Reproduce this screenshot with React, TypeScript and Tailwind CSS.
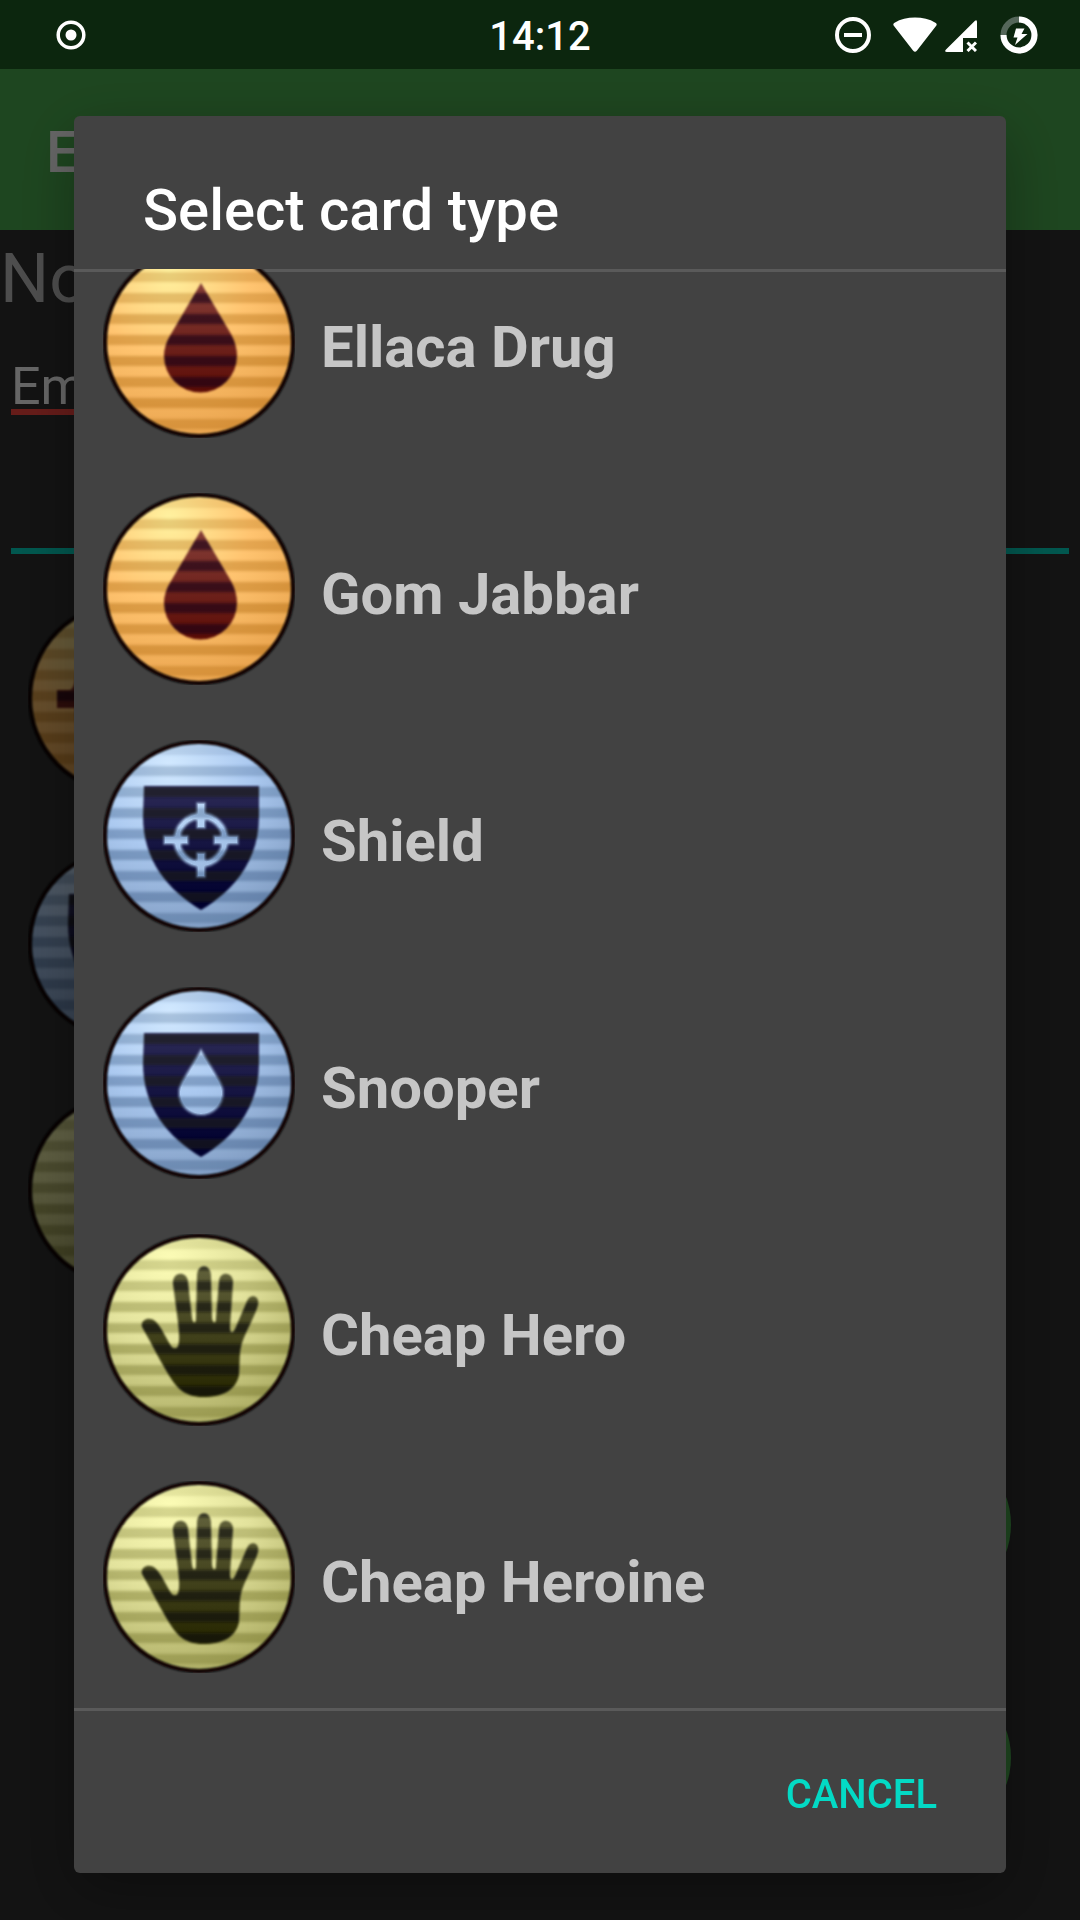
import { useId } from "react";

type Tone = "orange" | "blue" | "yellow";
type Symbol = "drop" | "shieldTarget" | "shieldDrop" | "hand" | "cross" | "none";

const tones: Record<Tone, { base: [string, string, string]; stripe: string; ink: [string, string]; inkStripe: string }> = {
  orange: { base: ["#fff2a0", "#ffc470", "#eba650"], stripe: "#a05c00", ink: ["#843c36", "#560600"], inkStripe: "#180014" },
  blue: { base: ["#d2e9ff", "#abc9f0", "#84a0c6"], stripe: "#2c4c74", ink: ["#2e2c58", "#00002e"], inkStripe: "#1c1c14" },
  yellow: { base: ["#fcfcb6", "#e2e29c", "#b1b168"], stripe: "#5e5e14", ink: ["#5e5e38", "#262600"], inkStripe: "#08080c" },
};

const stripes = [
  { y: 10, o: 0.12 },
  { y: 31, o: 0.24 },
  { y: 52, o: 0.28 },
  { y: 73, o: 0.32 },
  { y: 94, o: 0.34 },
  { y: 115, o: 0.36 },
  { y: 136, o: 0.34 },
  { y: 157, o: 0.34 },
  { y: 178, o: 0.28 },
];

const SHIELD = "M41 46H156V76C156 121 131 150 98 170C65 150 40 121 40 76Z";
const HAND =
  "M39 93C37 86 46 82 52 87C58 92 63 104 68 112C70 115 74 115 75 112C77 106 76 98 75 88L70 50C69 38 83 36 85 47L89 84C90 90 93 90 93 84L94 42C94 29 108 29 108 42L109 84C110 90 113 90 113 84L116 47C117 36 131 38 130 49L127 93C127 100 130 99 132 95L144 67C148 59 157 62 155 71C153 80 143 97 139 109C136 118 137 128 136 141C133 156 120 163 100 163C82 163 74 154 67 143C57 127 50 112 39 93Z";

function SymbolShape({ symbol }: { symbol: Symbol }) {
  switch (symbol) {
    case "drop":
      return <path d="M98 37L128 88Q134 99 134 110A36.500 36.500 0 0 1 61 110Q61 99 68 88Z" fill="white" />;
    case "shieldTarget":
      return (
        <>
          <path d={SHIELD} fill="white" />
          <g fill="none" stroke="black">
            <circle cx="98" cy="100" r="24" strokeWidth="8" />
            <path d="M98 62V89M98 112V138M60 100H86M110 100H136" strokeWidth="10" />
          </g>
        </>
      );
    case "shieldDrop":
      return (
        <>
          <path d={SHIELD} fill="white" />
          <path d="M98 61L117 93Q121 100 121 106A23 23 0 0 1 75 106Q75 100 79 93Z" fill="black" />
        </>
      );
    case "hand":
      return <path d={HAND} fill="white" />;
    case "cross":
      return <path d="M29 88H42Q47 86 48 70H64V88H150V106H64V124H48L47 106H29Z" fill="white" />;
    default:
      return null;
  }
}

function CardToken({ tone, symbol }: { tone: Tone; symbol: Symbol }) {
  const id = useId();
  const t = tones[tone];
  return (
    <svg viewBox="0 0 192 192" className="size-48 shrink-0" aria-hidden="true">
      <defs>
        <radialGradient id={`${id}base`} gradientUnits="userSpaceOnUse" cx="66" cy="26" r="165">
          <stop offset="0" stopColor={t.base[0]} />
          <stop offset="0.5" stopColor={t.base[1]} />
          <stop offset="1" stopColor={t.base[2]} />
        </radialGradient>
        <linearGradient id={`${id}ink`} gradientUnits="userSpaceOnUse" x1="0" y1="40" x2="0" y2="160">
          <stop offset="0" stopColor={t.ink[0]} />
          <stop offset="1" stopColor={t.ink[1]} />
        </linearGradient>
        <filter id={`${id}soft`} x="-10%" y="-60%" width="120%" height="220%">
          <feGaussianBlur stdDeviation="1.6" />
        </filter>
        <filter id={`${id}edge`} x="-5%" y="-5%" width="110%" height="110%">
          <feGaussianBlur stdDeviation="0.8" />
        </filter>
        <clipPath id={`${id}clip`}>
          <circle cx="96" cy="96" r="94" />
        </clipPath>
        <mask id={`${id}mask`} maskUnits="userSpaceOnUse" x="0" y="0" width="192" height="192">
          <g filter={`url(#${id}edge)`}>
            <SymbolShape symbol={symbol} />
          </g>
        </mask>
      </defs>
      <g clipPath={`url(#${id}clip)`}>
        <rect width="192" height="192" fill={`url(#${id}base)`} />
        {stripes.map((s) => (
          <rect key={s.y} x="0" y={s.y - 5} width="192" height="10" fill={t.stripe} opacity={s.o} filter={`url(#${id}soft)`} />
        ))}
      </g>
      <g mask={`url(#${id}mask)`}>
        <rect width="192" height="192" fill={`url(#${id}ink)`} />
        {stripes.map((s) => (
          <rect key={s.y} x="0" y={s.y - 5} width="192" height="10" fill={t.inkStripe} opacity="0.6" filter={`url(#${id}soft)`} />
        ))}
      </g>
      <circle cx="96" cy="96" r="94" fill="none" stroke="#0a0604" strokeWidth="4" filter={`url(#${id}edge)`} />
    </svg>
  );
}

const cards: { name: string; tone: Tone; symbol: Symbol }[] = [
  { name: "Ellaca Drug", tone: "orange", symbol: "drop" },
  { name: "Gom Jabbar", tone: "orange", symbol: "drop" },
  { name: "Shield", tone: "blue", symbol: "shieldTarget" },
  { name: "Snooper", tone: "blue", symbol: "shieldDrop" },
  { name: "Cheap Hero", tone: "yellow", symbol: "hand" },
  { name: "Cheap Heroine", tone: "yellow", symbol: "hand" },
];

function StatusBar() {
  return (
    <header className="relative z-20 grid h-[69px] grid-cols-3 items-center bg-[#0c260e] text-white">
      <svg viewBox="0 0 30 30" className="ml-14 size-[30px]" aria-hidden="true">
        <circle cx="15" cy="15" r="12.800" fill="none" stroke="currentColor" strokeWidth="3.500" />
        <circle cx="15" cy="15" r="5.500" fill="currentColor" />
      </svg>
      <time className="pt-1 text-center text-[40px] leading-10 font-medium">14:12</time>
      <div className="mr-[42px] flex items-center justify-end">
        <svg viewBox="0 0 36 36" className="mr-[22px] size-9" aria-hidden="true" fill="none" stroke="currentColor">
          <circle cx="18" cy="18" r="16" strokeWidth="4" />
          <path d="M9 18H27" strokeWidth="4" />
        </svg>
        <svg viewBox="0 0 44 36" className="mr-2 h-9 w-11" aria-hidden="true" fill="currentColor">
          <path d="M1 9C-.2 7.600.2 6.600 1.600 5.700C7.500 2.300 14.500.6 22 .6S36.500 2.300 42.400 5.700C43.800 6.600 44.200 7.600 43 9L24 33.600C22.600 35.200 21.400 35.200 20 33.600Z" />
        </svg>
        <svg viewBox="0 0 32 32" className="mt-[3px] mr-[23px] size-8" aria-hidden="true">
          <path d="M30 .8Q32-.6 32 2V18H18V32H2Q-1.200 32 1 29.500Z" fill="currentColor" />
          <path d="M22.500 22.500L31 31M31 22.500L22.500 31" stroke="currentColor" strokeWidth="3" />
        </svg>
        <svg viewBox="0 0 38 38" className="size-[38px]" aria-hidden="true">
          <circle cx="19" cy="19" r="15.500" fill="none" stroke="#55675a" strokeWidth="6" />
          <path d="M19 3.500A15.500 15.500 0 1 1 3.500 19" fill="none" stroke="currentColor" strokeWidth="6" />
          <path d="M16 12.500H24.500L21.500 18H27.500L15 29L17.500 21.500H13.500Z" fill="currentColor" />
        </svg>
      </div>
    </header>
  );
}

function DeckScreen() {
  return (
    <div className="flex flex-1 flex-col">
      <div className="flex h-[161px] items-center bg-[#4caf50] pt-1 pl-[46px]">
        <h1 className="text-[58px] leading-[68px] font-medium text-white">E</h1>
      </div>
      <main className="flex flex-1 flex-col">
        <p className="mt-2 text-[69px] leading-[81px] text-[#c1c1c1]">No</p>
        <input
          aria-label="Name"
          defaultValue="Em"
          className="mt-7 ml-[11px] h-[68px] w-1/2 border-b-[6px] border-[#ff4740] bg-transparent pt-4 text-[52px] leading-[61px] text-white outline-none"
        />
        <input
          aria-label="Notes"
          className="mx-[11px] mt-[71px] h-[68px] border-b-[6px] border-[#03dac5] bg-transparent text-[52px] text-white outline-none"
        />
        <div className="mt-12 flex flex-col gap-[54px] pl-7">
          <CardToken tone="orange" symbol="cross" />
          <CardToken tone="blue" symbol="shieldTarget" />
          <CardToken tone="yellow" symbol="none" />
        </div>
        <div className="mt-auto mr-[69px] mb-[82px] flex flex-col items-end gap-[72px]">
          <button aria-label="Add card" className="size-[161px] rounded-full bg-[#4caf50]" />
          <button aria-label="Save" className="size-[161px] rounded-full bg-[#4caf50]" />
        </div>
      </main>
    </div>
  );
}

export default function App() {
  return (
    <div className="flex h-screen flex-col overflow-hidden bg-[#303030] font-[Roboto,sans-serif]">
      <StatusBar />
      <DeckScreen />
      <div className="fixed inset-0 z-10 flex bg-black/60 px-[74px] pt-[116px] pb-[47px]">
        <section
          role="dialog"
          aria-modal="true"
          aria-labelledby="dialog-title"
          className="flex flex-1 flex-col overflow-hidden rounded-md bg-[#424242] shadow-[0_18px_60px_rgba(0,0,0,0.3)]"
        >
          <h2
            id="dialog-title"
            className="border-b-[3px] border-[#5a5a5a] px-[69px] pt-[60px] pb-[25px] text-[58px] leading-[68px] font-medium text-white"
          >
            Select card type
          </h2>
          <ul className="-mt-[3px] flex min-h-0 flex-1 flex-col justify-end overflow-hidden">
            {cards.map((card) => (
              <li key={card.name} className="shrink-0">
                <button className="flex h-[247px] w-full items-center gap-[26px] pl-[29px] text-left">
                  <span className="pb-4">
                    <CardToken tone={card.tone} symbol={card.symbol} />
                  </span>
                  <span className="pb-[6px] text-[58px] leading-[68px] font-bold text-[#c6c6c6]">{card.name}</span>
                </button>
              </li>
            ))}
          </ul>
          <footer className="flex justify-end border-t-[3px] border-[#5a5a5a] px-[46px] pt-[14px] pb-[10px]">
            <button className="h-[138px] px-[23px] text-[40px] leading-[47px] font-medium text-[#03dac5]">CANCEL</button>
          </footer>
        </section>
      </div>
    </div>
  );
}
